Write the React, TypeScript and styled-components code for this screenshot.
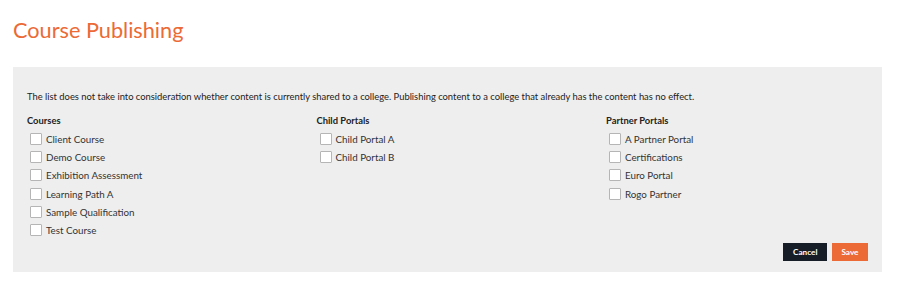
import styled, { createGlobalStyle } from 'styled-components'

const GlobalStyle = createGlobalStyle`
  body {
    margin: 0;
    background: #ffffff;
    font-family: Lato, 'Open Sans', sans-serif;
    color: #222;
  }
`

const StyledPage = styled.div`
  padding: 0 22px 0 13px;
`

const StyledTitle = styled.h1`
  margin: 17px 0 0;
  font-size: 21.7px;
  line-height: 26px;
  font-weight: 400;
  color: #ec6a36;
`

const StyledPanel = styled.div`
  margin-top: 24px;
  background: #eeeeee;
  padding: 24px 14px 11px;
`

const StyledNote = styled.p`
  margin: 0 0 12px;
  font-size: 9.4px;
  line-height: 12px;
  color: #222;
`

const StyledColumns = styled.div`
  display: grid;
  grid-template-columns: 289.5px 289.5px 1fr;
`

const StyledHeading = styled.div`
  font-size: 9.4px;
  line-height: 12px;
  font-weight: 700;
  color: #222;
  margin-bottom: 3px;
`

const StyledRow = styled.label`
  display: flex;
  align-items: center;
  gap: 4px;
  height: 18.2px;
  padding-left: 3px;
  font-size: 9.8px;
  color: #333;
`

const StyledBox = styled.span`
  width: 12px;
  height: 12px;
  box-sizing: border-box;
  background: #fff;
  border: 1px solid #b5b5b5;
  border-radius: 1px;
`

const StyledActions = styled.div`
  display: flex;
  justify-content: flex-end;
  gap: 5px;
  margin-top: 4px;
`

const StyledButton = styled.button<{ $variant: 'dark' | 'primary' }>`
  height: 18px;
  padding: 0 9.5px;
  border: none;
  border-radius: 0;
  font-family: Lato, 'Open Sans', sans-serif;
  font-size: 8.2px;
  font-weight: 700;
  color: #fff;
  background: ${(p) => (p.$variant === 'dark' ? '#161d26' : '#ec6a36')};
`

const groups = [
  {
    title: 'Courses',
    items: [
      'Client Course',
      'Demo Course',
      'Exhibition Assessment',
      'Learning Path A',
      'Sample Qualification',
      'Test Course',
    ],
  },
  { title: 'Child Portals', items: ['Child Portal A', 'Child Portal B'] },
  {
    title: 'Partner Portals',
    items: ['A Partner Portal', 'Certifications', 'Euro Portal', 'Rogo Partner'],
  },
]

export default function App() {
  return (
    <StyledPage>
      <GlobalStyle />
      <StyledTitle>Course Publishing</StyledTitle>
      <StyledPanel>
        <StyledNote>
          The list does not take into consideration whether content is currently shared to a college.
          Publishing content to a college that already has the content has no effect.
        </StyledNote>
        <StyledColumns>
          {groups.map((group) => (
            <div key={group.title}>
              <StyledHeading>{group.title}</StyledHeading>
              {group.items.map((item) => (
                <StyledRow key={item}>
                  <StyledBox />
                  {item}
                </StyledRow>
              ))}
            </div>
          ))}
        </StyledColumns>
        <StyledActions>
          <StyledButton $variant="dark">Cancel</StyledButton>
          <StyledButton $variant="primary">Save</StyledButton>
        </StyledActions>
      </StyledPanel>
    </StyledPage>
  )
}
